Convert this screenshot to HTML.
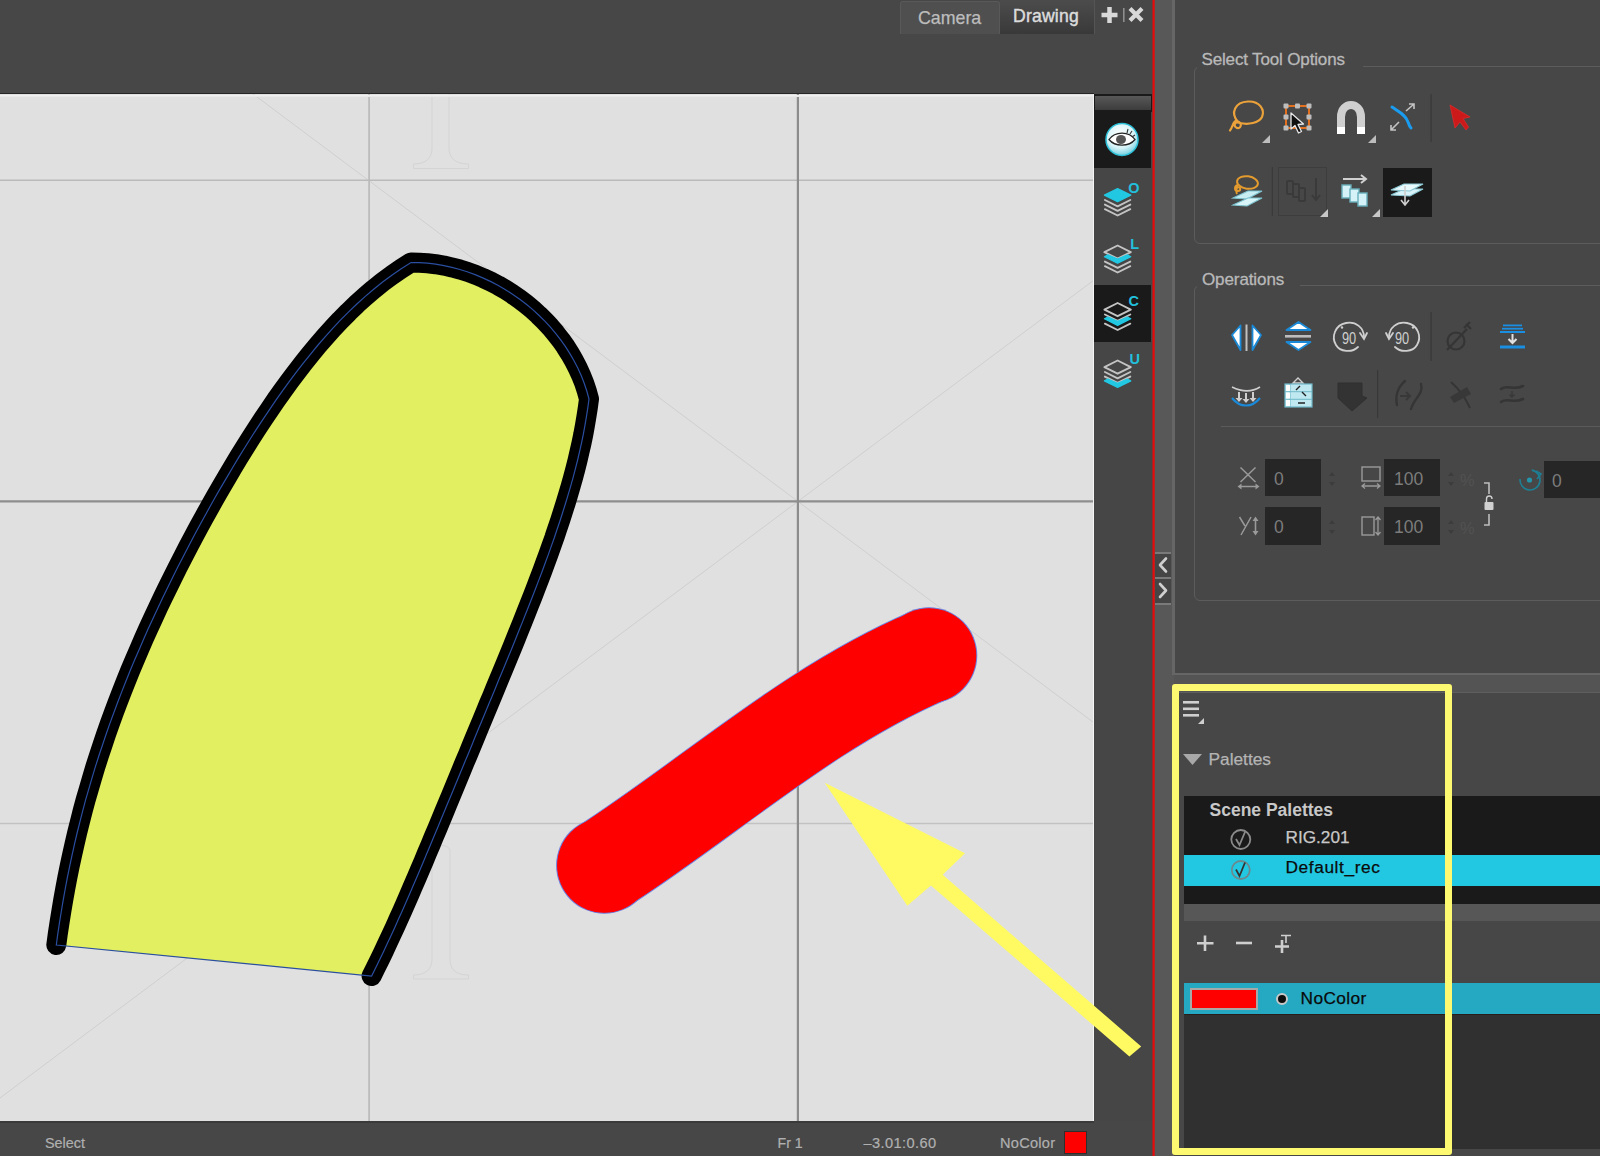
<!DOCTYPE html>
<html><head><meta charset="utf-8">
<style>
*{margin:0;padding:0;box-sizing:border-box}
html,body{width:1600px;height:1156px;overflow:hidden;background:#474747;font-family:"Liberation Sans",sans-serif}
.a{position:absolute}
.t{position:absolute;white-space:nowrap;line-height:1}
svg{position:absolute;overflow:visible}
</style></head><body>
<!-- ===== top bar ===== -->
<div class="a" style="left:900px;top:1px;width:100px;height:33px;background:#4f4f4f;border:1px solid #595959;border-bottom:none;border-radius:3px 3px 0 0"></div>
<div class="a" style="left:1000px;top:0px;width:95px;height:34px;background:linear-gradient(#4c4c4c,#393939);border-right:1px solid #555"></div>
<div class="t" style="left:918px;top:10.2px;font-size:17.8px;color:#bdbdbd;-webkit-text-stroke:0.25px #bdbdbd">Camera</div>
<div class="t" style="left:1013px;top:7.6px;font-size:17.6px;color:#dcdcdc;-webkit-text-stroke:0.45px #dcdcdc;letter-spacing:0.2px">Drawing</div>
<svg style="left:1100px;top:6px" width="46" height="18" viewBox="0 0 46 18">
<path d="M9.5,1 V17 M1.5,9 H17.5" stroke="#d8d8d8" stroke-width="4.5"/>
<path d="M23.8,2 V16" stroke="#8e8e8e" stroke-width="1.6"/>
<path d="M30,2.5 L42,14.5 M42,2.5 L30,14.5" stroke="#d8d8d8" stroke-width="4.2"/>
</svg>
<!-- ===== canvas ===== -->
<div class="a" style="left:0;top:92.5px;width:1094px;height:2px;background:#262626"></div>
<div class="a" style="left:0;top:94px;width:1094px;height:1027px;overflow:hidden;background:#e0e0e0">
<svg style="left:0;top:-94px" width="1094" height="1121" viewBox="0 0 1094 1121">
<g stroke="#cfcfcf" stroke-width="1" fill="none">
<line x1="0" y1="-95.2" x2="1094" y2="722.8"/>
<line x1="0" y1="1098" x2="1094" y2="280"/>
<path d="M413.5,168.5 H468.5 V164 C455,164 449,158 449,148 V94 M413.5,168.5 V164 C426,164 432,158 432,148 V94" stroke="#d4d4d4"/>
<path d="M413.5,979 H468.5 V975 C455,975 450,969 450,959 V851 C450,848 447,845.5 441,845.5 C435,845.5 432,848 432,851 V959 C432,969 426,975 413.5,975Z" stroke="#d4d4d4"/>
</g>
<line x1="369.1" y1="94" x2="369.1" y2="1121" stroke="#bababa" stroke-width="1.7"/>
<line x1="0" y1="180.3" x2="1094" y2="180.3" stroke="#bababa" stroke-width="1.4"/>
<line x1="0" y1="823.4" x2="1094" y2="823.4" stroke="#c2c2c2" stroke-width="1.5"/>
<line x1="797.9" y1="94" x2="797.9" y2="1121" stroke="#8c8c8c" stroke-width="2.2"/>
<line x1="0" y1="501.4" x2="1094" y2="501.4" stroke="#8e8e8e" stroke-width="2.1"/>
<path d="M56.3,945.0 L57.8,933.9 L59.5,922.7 L61.3,911.5 L63.2,900.2 L65.2,889.0 L67.3,877.8 L69.6,866.6 L72.0,855.3 L74.5,844.2 L77.1,833.0 L79.9,821.9 L82.7,810.8 L85.7,799.7 L88.9,788.7 L92.1,777.7 L95.4,766.7 L98.9,755.8 L102.5,745.0 L106.1,734.2 L109.9,723.4 L113.8,712.7 L117.8,702.0 L121.9,691.4 L126.1,680.8 L130.3,670.3 L134.7,659.8 L139.2,649.4 L143.7,638.9 L148.3,628.6 L153.1,618.2 L157.9,607.9 L162.7,597.7 L167.7,587.5 L172.7,577.3 L177.8,567.1 L183.0,557.0 L188.2,546.9 L193.5,536.8 L198.9,526.7 L204.4,516.7 L209.9,506.8 L215.5,496.8 L221.2,486.9 L227.0,477.1 L232.8,467.2 L238.7,457.4 L244.7,447.7 L250.8,438.0 L257.0,428.4 L263.3,418.8 L269.7,409.4 L276.1,399.9 L282.7,390.6 L289.4,381.4 L296.3,372.2 L303.3,363.2 L310.4,354.3 L317.6,345.5 L325.1,336.9 L332.7,328.4 L340.4,320.2 L348.4,312.1 L356.6,304.2 L365.0,296.6 L373.7,289.2 L382.6,282.0 L391.8,275.2 L401.2,268.7 L411.0,262.5 L419.3,262.7 L427.5,263.2 L435.7,264.2 L443.9,265.6 L451.9,267.4 L459.9,269.5 L467.9,272.0 L475.7,274.9 L483.3,278.1 L490.9,281.6 L498.3,285.5 L505.5,289.7 L512.5,294.2 L519.4,299.0 L526.0,304.0 L532.5,309.4 L538.6,315.0 L544.6,320.9 L550.2,326.9 L555.6,333.3 L560.7,339.8 L565.5,346.6 L569.9,353.6 L574.0,360.7 L577.8,368.1 L581.2,375.6 L584.2,383.2 L586.8,391.0 L589.0,399.0 L587.8,407.9 L586.4,416.8 L584.9,425.6 L583.3,434.4 L581.5,443.1 L579.5,451.8 L577.5,460.5 L575.3,469.2 L573.0,477.8 L570.6,486.4 L568.1,494.9 L565.5,503.5 L562.8,512.0 L560.1,520.5 L557.2,529.0 L554.4,537.5 L551.4,545.9 L548.4,554.4 L545.3,562.8 L542.2,571.2 L539.0,579.6 L535.8,588.0 L532.6,596.3 L529.3,604.7 L526.0,613.0 L522.7,621.4 L519.3,629.7 L516.0,638.0 L512.6,646.4 L509.2,654.7 L505.8,663.0 L502.4,671.3 L498.9,679.6 L495.5,687.9 L492.1,696.2 L488.6,704.5 L485.2,712.8 L481.8,721.0 L478.3,729.3 L474.9,737.6 L471.5,745.9 L468.1,754.2 L464.6,762.4 L461.2,770.7 L457.8,779.0 L454.4,787.3 L451.0,795.5 L447.5,803.8 L444.1,812.1 L440.7,820.3 L437.3,828.6 L433.8,836.8 L430.4,845.1 L426.9,853.3 L423.5,861.6 L420.0,869.8 L416.5,878.0 L412.9,886.3 L409.4,894.5 L405.8,902.7 L402.2,910.9 L398.5,919.1 L394.9,927.2 L391.1,935.4 L387.3,943.5 L383.5,951.7 L379.6,959.8 L375.6,967.9 L371.6,976.0Z" fill="#e1ef61"/>
<path d="M56.3,945.0 L57.8,933.9 L59.5,922.7 L61.3,911.5 L63.2,900.2 L65.2,889.0 L67.3,877.8 L69.6,866.6 L72.0,855.3 L74.5,844.2 L77.1,833.0 L79.9,821.9 L82.7,810.8 L85.7,799.7 L88.9,788.7 L92.1,777.7 L95.4,766.7 L98.9,755.8 L102.5,745.0 L106.1,734.2 L109.9,723.4 L113.8,712.7 L117.8,702.0 L121.9,691.4 L126.1,680.8 L130.3,670.3 L134.7,659.8 L139.2,649.4 L143.7,638.9 L148.3,628.6 L153.1,618.2 L157.9,607.9 L162.7,597.7 L167.7,587.5 L172.7,577.3 L177.8,567.1 L183.0,557.0 L188.2,546.9 L193.5,536.8 L198.9,526.7 L204.4,516.7 L209.9,506.8 L215.5,496.8 L221.2,486.9 L227.0,477.1 L232.8,467.2 L238.7,457.4 L244.7,447.7 L250.8,438.0 L257.0,428.4 L263.3,418.8 L269.7,409.4 L276.1,399.9 L282.7,390.6 L289.4,381.4 L296.3,372.2 L303.3,363.2 L310.4,354.3 L317.6,345.5 L325.1,336.9 L332.7,328.4 L340.4,320.2 L348.4,312.1 L356.6,304.2 L365.0,296.6 L373.7,289.2 L382.6,282.0 L391.8,275.2 L401.2,268.7 L411.0,262.5 L419.3,262.7 L427.5,263.2 L435.7,264.2 L443.9,265.6 L451.9,267.4 L459.9,269.5 L467.9,272.0 L475.7,274.9 L483.3,278.1 L490.9,281.6 L498.3,285.5 L505.5,289.7 L512.5,294.2 L519.4,299.0 L526.0,304.0 L532.5,309.4 L538.6,315.0 L544.6,320.9 L550.2,326.9 L555.6,333.3 L560.7,339.8 L565.5,346.6 L569.9,353.6 L574.0,360.7 L577.8,368.1 L581.2,375.6 L584.2,383.2 L586.8,391.0 L589.0,399.0 L587.8,407.9 L586.4,416.8 L584.9,425.6 L583.3,434.4 L581.5,443.1 L579.5,451.8 L577.5,460.5 L575.3,469.2 L573.0,477.8 L570.6,486.4 L568.1,494.9 L565.5,503.5 L562.8,512.0 L560.1,520.5 L557.2,529.0 L554.4,537.5 L551.4,545.9 L548.4,554.4 L545.3,562.8 L542.2,571.2 L539.0,579.6 L535.8,588.0 L532.6,596.3 L529.3,604.7 L526.0,613.0 L522.7,621.4 L519.3,629.7 L516.0,638.0 L512.6,646.4 L509.2,654.7 L505.8,663.0 L502.4,671.3 L498.9,679.6 L495.5,687.9 L492.1,696.2 L488.6,704.5 L485.2,712.8 L481.8,721.0 L478.3,729.3 L474.9,737.6 L471.5,745.9 L468.1,754.2 L464.6,762.4 L461.2,770.7 L457.8,779.0 L454.4,787.3 L451.0,795.5 L447.5,803.8 L444.1,812.1 L440.7,820.3 L437.3,828.6 L433.8,836.8 L430.4,845.1 L426.9,853.3 L423.5,861.6 L420.0,869.8 L416.5,878.0 L412.9,886.3 L409.4,894.5 L405.8,902.7 L402.2,910.9 L398.5,919.1 L394.9,927.2 L391.1,935.4 L387.3,943.5 L383.5,951.7 L379.6,959.8 L375.6,967.9 L371.6,976.0" fill="none" stroke="#000" stroke-width="20" stroke-linecap="round" stroke-linejoin="round"/>
<path d="M56.3,945.0 L57.8,933.9 L59.5,922.7 L61.3,911.5 L63.2,900.2 L65.2,889.0 L67.3,877.8 L69.6,866.6 L72.0,855.3 L74.5,844.2 L77.1,833.0 L79.9,821.9 L82.7,810.8 L85.7,799.7 L88.9,788.7 L92.1,777.7 L95.4,766.7 L98.9,755.8 L102.5,745.0 L106.1,734.2 L109.9,723.4 L113.8,712.7 L117.8,702.0 L121.9,691.4 L126.1,680.8 L130.3,670.3 L134.7,659.8 L139.2,649.4 L143.7,638.9 L148.3,628.6 L153.1,618.2 L157.9,607.9 L162.7,597.7 L167.7,587.5 L172.7,577.3 L177.8,567.1 L183.0,557.0 L188.2,546.9 L193.5,536.8 L198.9,526.7 L204.4,516.7 L209.9,506.8 L215.5,496.8 L221.2,486.9 L227.0,477.1 L232.8,467.2 L238.7,457.4 L244.7,447.7 L250.8,438.0 L257.0,428.4 L263.3,418.8 L269.7,409.4 L276.1,399.9 L282.7,390.6 L289.4,381.4 L296.3,372.2 L303.3,363.2 L310.4,354.3 L317.6,345.5 L325.1,336.9 L332.7,328.4 L340.4,320.2 L348.4,312.1 L356.6,304.2 L365.0,296.6 L373.7,289.2 L382.6,282.0 L391.8,275.2 L401.2,268.7 L411.0,262.5 L419.3,262.7 L427.5,263.2 L435.7,264.2 L443.9,265.6 L451.9,267.4 L459.9,269.5 L467.9,272.0 L475.7,274.9 L483.3,278.1 L490.9,281.6 L498.3,285.5 L505.5,289.7 L512.5,294.2 L519.4,299.0 L526.0,304.0 L532.5,309.4 L538.6,315.0 L544.6,320.9 L550.2,326.9 L555.6,333.3 L560.7,339.8 L565.5,346.6 L569.9,353.6 L574.0,360.7 L577.8,368.1 L581.2,375.6 L584.2,383.2 L586.8,391.0 L589.0,399.0 L587.8,407.9 L586.4,416.8 L584.9,425.6 L583.3,434.4 L581.5,443.1 L579.5,451.8 L577.5,460.5 L575.3,469.2 L573.0,477.8 L570.6,486.4 L568.1,494.9 L565.5,503.5 L562.8,512.0 L560.1,520.5 L557.2,529.0 L554.4,537.5 L551.4,545.9 L548.4,554.4 L545.3,562.8 L542.2,571.2 L539.0,579.6 L535.8,588.0 L532.6,596.3 L529.3,604.7 L526.0,613.0 L522.7,621.4 L519.3,629.7 L516.0,638.0 L512.6,646.4 L509.2,654.7 L505.8,663.0 L502.4,671.3 L498.9,679.6 L495.5,687.9 L492.1,696.2 L488.6,704.5 L485.2,712.8 L481.8,721.0 L478.3,729.3 L474.9,737.6 L471.5,745.9 L468.1,754.2 L464.6,762.4 L461.2,770.7 L457.8,779.0 L454.4,787.3 L451.0,795.5 L447.5,803.8 L444.1,812.1 L440.7,820.3 L437.3,828.6 L433.8,836.8 L430.4,845.1 L426.9,853.3 L423.5,861.6 L420.0,869.8 L416.5,878.0 L412.9,886.3 L409.4,894.5 L405.8,902.7 L402.2,910.9 L398.5,919.1 L394.9,927.2 L391.1,935.4 L387.3,943.5 L383.5,951.7 L379.6,959.8 L375.6,967.9 L371.6,976.0Z" fill="none" stroke="#2a4ea0" stroke-width="1.2"/>
<g fill="none" stroke-linecap="round"><path d="M604.4,865.5 C711.5,796.2 809.9,706.3 929.0,655.5" stroke="#7080e0" stroke-width="95.5"/><path d="M604.4,865.5 C711.5,796.2 809.9,706.3 929.0,655.5" stroke="#ff0000" stroke-width="93.5"/></g>
<circle cx="604.4" cy="865.5" r="48.3" fill="#7080e0"/><circle cx="929" cy="655.5" r="48.3" fill="#7080e0"/><path d="M604.4,865.5 C711.5,796.2 809.9,706.3 929.0,655.5" fill="none" stroke="#ff0000" stroke-width="93.5" stroke-linecap="round"/><circle cx="604.4" cy="865.5" r="47.3" fill="#ff0000"/><circle cx="929" cy="655.5" r="47.3" fill="#ff0000"/>
</svg>
<div class="a" style="left:0;top:0.5px;width:1094px;height:2px;background:linear-gradient(#f2f2f2,#e4e4e4)"></div>
<div class="a" style="left:1093px;top:0;width:1px;height:1027px;background:#f4f4f4"></div>
</div>
<!-- ===== status bar ===== -->
<div class="a" style="left:0;top:1121px;width:1094px;height:2px;background:#3a3a3a"></div>
<div class="t" style="left:45px;top:1135.7px;font-size:14.4px;color:#b0b0b0;-webkit-text-stroke:0.2px #b0b0b0">Select</div>
<div class="t" style="left:777.5px;top:1136px;font-size:14.2px;color:#b0b0b0;-webkit-text-stroke:0.2px #b0b0b0">Fr 1</div>
<div class="t" style="left:863.5px;top:1135.6px;font-size:14.6px;color:#b0b0b0;letter-spacing:0.4px;-webkit-text-stroke:0.2px #b0b0b0">&#8211;3.01:0.60</div>
<div class="t" style="left:1000px;top:1135.5px;font-size:14.6px;color:#b0b0b0;letter-spacing:0.25px;-webkit-text-stroke:0.2px #b0b0b0">NoColor</div>
<div class="a" style="left:1064px;top:1131px;width:23px;height:23px;background:#ff0000;border:1px solid #2e2e2e"></div>
<!-- ===== toolbar ===== -->
<div class="a" style="left:1094px;top:94px;width:58px;height:1027px;background:#464646"></div>
<div class="a" style="left:1094px;top:94px;width:58px;height:18px;background:#1a1a1a"></div>
<div class="a" style="left:1095px;top:96px;width:56px;height:14px;background:linear-gradient(#585858,#3c3c3c)"></div>
<div class="a" style="left:1094px;top:112px;width:57px;height:56px;background:#1a1a1a"></div>
<div class="a" style="left:1094px;top:285px;width:57px;height:57px;background:#1a1a1a"></div>
<!-- ===== divider ===== -->
<div class="a" style="left:1154px;top:0;width:18px;height:1156px;background:#585858"></div>
<svg style="left:1150px;top:0" width="8" height="1156"><rect x="2.5" y="0" width="2.2" height="1156" fill="#e60a0a"/></svg>
<div class="a" style="left:1172px;top:0;width:2px;height:675px;background:#636363"></div>
<div class="a" style="left:1172px;top:675px;width:2px;height:481px;background:#585858"></div>
<div class="a" style="left:1172px;top:672.5px;width:428px;height:2px;background:#666"></div>
<div class="a" style="left:1172px;top:0;width:2.5px;height:674px;background:#666;border-radius:0 0 0 3px"></div>
<!-- ===== right panel ===== -->
<div class="a" style="left:1174px;top:675px;width:426px;height:18px;background:#545454"></div>
<div class="a" style="left:1174px;top:692px;width:426px;height:1px;background:#5e5e5e"></div>
<!-- ===== toolbar icons ===== -->
<svg style="left:1094px;top:94px" width="58" height="300" viewBox="1094 94 58 300">
<defs><radialGradient id="eg" cx="0.45" cy="0.35" r="0.7"><stop offset="0" stop-color="#ffffff"/><stop offset="0.6" stop-color="#d8f4f8"/><stop offset="1" stop-color="#5ec8dc"/></radialGradient></defs>
<circle cx="1122" cy="139.5" r="16" fill="url(#eg)" stroke="#2cc0d8" stroke-width="1.5"/>
<path d="M1109,139.5 C1115,131 1129,131 1135,139.5 C1129,147 1115,147 1109,139.5Z" fill="#fff" stroke="#222" stroke-width="1.3"/>
<ellipse cx="1121" cy="139.5" rx="5" ry="4.5" fill="#555"/>
<path d="M1127,133 L1128,129 M1130,134 L1132,131 M1132,137 L1135,135" stroke="#333" stroke-width="1.1"/>
<g><path d="M1104.3999999999999,195.1 L1117.6,188.5 L1130.8,195.1 L1117.6,201.7Z" fill="#22c8e2" stroke="#22c8e2" stroke-width="1.2" stroke-linejoin="round"/><path d="M1104.8999999999999,200.0 L1117.6,206.29999999999998 L1130.3,200.0" fill="none" stroke="#c4c4c4" stroke-width="1.9" stroke-linejoin="round" stroke-linecap="round"/><path d="M1104.8999999999999,204.6 L1117.6,210.89999999999998 L1130.3,204.6" fill="none" stroke="#c4c4c4" stroke-width="1.9" stroke-linejoin="round" stroke-linecap="round"/><path d="M1104.8999999999999,209.20000000000002 L1117.6,215.5 L1130.3,209.20000000000002" fill="none" stroke="#c4c4c4" stroke-width="1.9" stroke-linejoin="round" stroke-linecap="round"/><text x="1128.3" y="192.8" font-size="14.5" font-weight="bold" font-family="Liberation Sans" fill="#22c0dc">O</text><path d="M1104.3999999999999,252.1 L1117.6,245.5 L1130.8,252.1 L1117.6,258.7Z" fill="none" stroke="#c4c4c4" stroke-width="1.9" stroke-linejoin="round"/><path d="M1104.3999999999999,256.7 L1117.6,263.3 L1130.8,256.7 L1127.3,254.89999999999998 L1117.6,259.1 L1107.8999999999999,254.89999999999998Z" fill="#22c8e2" stroke="#22c8e2" stroke-width="1.2" stroke-linejoin="round"/><path d="M1104.8999999999999,261.6 L1117.6,267.9 L1130.3,261.6" fill="none" stroke="#c4c4c4" stroke-width="1.9" stroke-linejoin="round" stroke-linecap="round"/><path d="M1104.8999999999999,266.20000000000005 L1117.6,272.5 L1130.3,266.20000000000005" fill="none" stroke="#c4c4c4" stroke-width="1.9" stroke-linejoin="round" stroke-linecap="round"/><text x="1130.3" y="248.5" font-size="14.5" font-weight="bold" font-family="Liberation Sans" fill="#22c0dc">L</text><path d="M1104.3999999999999,309.6 L1117.6,303 L1130.8,309.6 L1117.6,316.2Z" fill="none" stroke="#c4c4c4" stroke-width="1.9" stroke-linejoin="round"/><path d="M1104.8999999999999,314.50000000000006 L1117.6,320.8 L1130.3,314.50000000000006" fill="none" stroke="#c4c4c4" stroke-width="1.9" stroke-linejoin="round" stroke-linecap="round"/><path d="M1104.3999999999999,318.8 L1117.6,325.4 L1130.8,318.8 L1127.3,317.0 L1117.6,321.2 L1107.8999999999999,317.0Z" fill="#22c8e2" stroke="#22c8e2" stroke-width="1.2" stroke-linejoin="round"/><path d="M1104.8999999999999,323.70000000000005 L1117.6,330.0 L1130.3,323.70000000000005" fill="none" stroke="#c4c4c4" stroke-width="1.9" stroke-linejoin="round" stroke-linecap="round"/><text x="1128.6" y="305.5" font-size="14.5" font-weight="bold" font-family="Liberation Sans" fill="#22c0dc">C</text><path d="M1104.3999999999999,367.1 L1117.6,360.5 L1130.8,367.1 L1117.6,373.7Z" fill="none" stroke="#c4c4c4" stroke-width="1.9" stroke-linejoin="round"/><path d="M1104.8999999999999,372.00000000000006 L1117.6,378.3 L1130.3,372.00000000000006" fill="none" stroke="#c4c4c4" stroke-width="1.9" stroke-linejoin="round" stroke-linecap="round"/><path d="M1104.8999999999999,376.6 L1117.6,382.9 L1130.3,376.6" fill="none" stroke="#c4c4c4" stroke-width="1.9" stroke-linejoin="round" stroke-linecap="round"/><path d="M1104.3999999999999,380.90000000000003 L1117.6,387.5 L1130.8,380.90000000000003 L1127.3,379.1 L1117.6,383.3 L1107.8999999999999,379.1Z" fill="#22c8e2" stroke="#22c8e2" stroke-width="1.2" stroke-linejoin="round"/><text x="1129.6" y="363.5" font-size="14.5" font-weight="bold" font-family="Liberation Sans" fill="#22c0dc">U</text></g>
</svg>
<!-- ===== select tool options ===== -->
<div class="a" style="left:1194px;top:66px;width:420px;height:178px;border:1.5px solid #5c5c5c;border-radius:6px"></div>
<div class="a" style="left:1197px;top:50px;width:166px;height:24px;background:#474747"></div>
<div class="t" style="left:1201.5px;top:51.1px;font-size:17px;color:#b9b9b9;letter-spacing:-0.15px;-webkit-text-stroke:0.3px #b9b9b9">Select Tool Options</div>
<svg style="left:1220px;top:90px" width="270" height="135" viewBox="1220 90 270 135">
<!-- lasso -->
<g fill="none" stroke="#eca23a" stroke-width="2.2" stroke-linecap="round">
<path d="M1238,122 C1230,113 1235,102 1248,101.5 C1260,101 1265,110 1262,117 C1259,123 1248,125 1240,123 C1234,121 1233,126 1237,128 C1241,129 1243,123 1237,121 C1233,120 1233,127 1230,130.5"/>
</g>
<path d="M1270,135 V143 H1262Z" fill="#bdbdbd"/>
<!-- select box -->
<g stroke="#e2701e" stroke-width="2"><path d="M1286,106 H1309 V128 H1286Z" fill="none"/></g>
<g fill="#bdbdbd"><rect x="1283.5" y="103.5" width="5" height="5" rx="1"/><rect x="1295" y="103.5" width="5" height="5" rx="1"/><rect x="1306.5" y="103.5" width="5" height="5" rx="1"/><rect x="1283.5" y="114.5" width="5" height="5" rx="1"/><rect x="1306.5" y="114.5" width="5" height="5" rx="1"/><rect x="1283.5" y="125.5" width="5" height="5" rx="1"/><rect x="1306.5" y="125.5" width="5" height="5" rx="1"/></g>
<path d="M1291,113 L1291,129 L1295,125.5 L1298.5,133 L1301.5,131.5 L1298,124.5 L1303.5,124 Z" fill="#111" stroke="#e8e8e8" stroke-width="1.3" stroke-linejoin="round"/>
<!-- magnet -->
<path d="M1341,134 V117 C1341,101 1361,101 1361,117 V134" fill="none" stroke="#cfcfcf" stroke-width="8"/>
<rect x="1337" y="127" width="8" height="7" fill="#fff"/><rect x="1357" y="127" width="8" height="7" fill="#fff"/>
<path d="M1376,135 V143 H1368Z" fill="#bdbdbd"/>
<!-- blue curve -->
<path d="M1392,107 C1398,111 1406,115 1408,122 C1409,125 1410,127 1411,128" fill="none" stroke="#1a9cf0" stroke-width="3" stroke-linecap="round"/>
<g fill="none" stroke="#c4c4c4" stroke-width="1.6"><path d="M1406,111 L1414,104 M1409,104 H1414 V109"/><path d="M1399,122 L1391,130 M1391,125 V130 H1396"/></g>
<!-- separator -->
<rect x="1430.5" y="94" width="1.2" height="48" fill="#383838"/>
<!-- red arrow -->
<path d="M1450,105 L1470,117 L1463,118.5 L1468.5,127 L1466,130 L1460,122 L1455,128 Z" fill="#cc1a1a" stroke="#e02828" stroke-width="0.8" stroke-linejoin="round"/>
<!-- row 2 -->
<g fill="none" stroke="#e39a2e" stroke-width="2"><ellipse cx="1247.5" cy="182.5" rx="10.5" ry="6.2" transform="rotate(8 1247.5 182.5)"/><path d="M1238,185 C1234,186 1234,191 1238,191 C1241,191 1241,187 1238,187 C1236,188 1236,192 1237,194"/></g>
<path d="M1233,198 L1248,191 L1262,191 L1247,199Z" fill="#c8eef4" stroke="#7fc4d0" stroke-width="1.2"/>
<path d="M1233,205 L1248,198 L1262,198 L1247,206Z" fill="#d8f6fa" stroke="#7fc4d0" stroke-width="1.2"/>
<rect x="1271.8" y="167" width="1.2" height="49" fill="#3a3a3a"/>
<rect x="1278.5" y="167.5" width="48" height="48" fill="none" stroke="#3d3d3d" stroke-width="1"/>
<g fill="none" stroke="#3a3a3a" stroke-width="2"><rect x="1287" y="181" width="6" height="13" rx="1"/><rect x="1293" y="184" width="6" height="13" rx="1"/><rect x="1299" y="188" width="6" height="13" rx="1"/><path d="M1316,178 V200 M1312,195 L1316,200 L1320,195"/></g>
<path d="M1328,209 V217 H1320Z" fill="#c8c8c8"/>
<g fill="#d4f2f8" stroke="#68aebb" stroke-width="1.4"><rect x="1342" y="185" width="9" height="13"/><rect x="1350" y="189" width="9" height="13"/><rect x="1358" y="193" width="9" height="13"/></g>
<path d="M1343,179 H1366 M1361,175 L1366,179 L1361,183" fill="none" stroke="#d0d0d0" stroke-width="2"/>
<path d="M1380,209 V217 H1372Z" fill="#c8c8c8"/>
<rect x="1383" y="168" width="49" height="49" fill="#1a1a1a"/>
<path d="M1391,195 L1404,189 L1423,189 L1410,196Z" fill="#d8f4fa" stroke="#8cc8d4" stroke-width="1.2"/>
<path d="M1391,190 L1404,184 L1423,184 L1410,191Z" fill="#e8fafe" stroke="#8cc8d4" stroke-width="1.2"/>
<path d="M1405,186 V205 M1401,200 L1405,205 L1409,200" fill="none" stroke="#cfcfcf" stroke-width="1.6"/>
</svg>
<!-- ===== operations ===== -->
<div class="a" style="left:1194px;top:285px;width:420px;height:316px;border:1.5px solid #5c5c5c;border-radius:6px"></div>
<div class="a" style="left:1197px;top:270px;width:103px;height:24px;background:#474747"></div>
<div class="t" style="left:1202px;top:270.9px;font-size:17px;color:#b9b9b9;letter-spacing:-0.1px;-webkit-text-stroke:0.3px #b9b9b9">Operations</div>
<div class="a" style="left:1221px;top:425.5px;width:379px;height:1.5px;background:#5a5a5a"></div>
<svg style="left:1220px;top:300px" width="380" height="250" viewBox="1220 300 380 250">
<!-- flip h -->
<path d="M1240.5,325.5 L1232,335 L1240.5,350Z" fill="#fff" stroke="#1a8ad8" stroke-width="1.8" stroke-linejoin="round"/>
<path d="M1252.5,325.5 L1261,335 L1252.5,350Z" fill="#fff" stroke="#1a8ad8" stroke-width="1.8" stroke-linejoin="round"/>
<rect x="1245.5" y="324.5" width="2" height="26.5" fill="#c0c0c0"/>
<!-- flip v -->
<path d="M1286.5,330 L1298.5,322 L1310.5,330Z" fill="#fff" stroke="#1a8ad8" stroke-width="1.8" stroke-linejoin="round"/>
<path d="M1286.5,342 L1298.5,350 L1310.5,342Z" fill="#fff" stroke="#1a8ad8" stroke-width="1.8" stroke-linejoin="round"/>
<rect x="1285" y="335" width="26" height="2.6" fill="#bdbdbd"/>
<!-- rotate cw -->
<g fill="none" stroke="#cfcfcf" stroke-width="1.8" stroke-linecap="round">
<path d="M1358,347 C1352,353 1340,352 1336,345 C1331,337 1335,325 1346,323 C1356,321 1364,328 1364,337"/>
<path d="M1360,333 L1364,339 L1367,333"/>
</g>
<text x="1342" y="344" font-size="16" font-family="Liberation Sans" fill="#cfcfcf" transform="translate(1342 0) scale(0.8 1) translate(-1342 0)">90</text>
<circle cx="1342" cy="327.5" r="1.2" fill="#cfcfcf"/>
<!-- rotate ccw -->
<g fill="none" stroke="#cfcfcf" stroke-width="1.8" stroke-linecap="round">
<path d="M1395,347 C1401,353 1413,352 1417,345 C1422,337 1418,325 1407,323 C1397,321 1389,328 1389,337"/>
<path d="M1386,333 L1389,339 L1393,333"/>
</g>
<text x="1395" y="344" font-size="16" font-family="Liberation Sans" fill="#cfcfcf" transform="translate(1395 0) scale(0.8 1) translate(-1395 0)">90</text>
<circle cx="1413" cy="327.5" r="1.2" fill="#cfcfcf"/>
<rect x="1430.5" y="312" width="1.2" height="49" fill="#383838"/>
<!-- dark pen -->
<g fill="none" stroke="#353535" stroke-width="2.2"><circle cx="1456" cy="341" r="8.5"/><path d="M1447,350 L1467,329"/><path d="M1466,324 L1471,329 M1464,328 L1470,322"/></g>
<!-- blue flatten -->
<g fill="#1a8ee0"><rect x="1503" y="324.5" width="19" height="1.8"/><rect x="1502" y="327.8" width="21" height="1.8"/><rect x="1500" y="331" width="25" height="2"/><rect x="1500" y="345.5" width="25" height="3"/></g>
<path d="M1512.5,334 V343 M1508.5,339 L1512.5,343 L1516.5,339" fill="none" stroke="#e0e0e0" stroke-width="2"/>
<!-- row 2 -->
<path d="M1232,387 C1242,392 1252,392 1260,387" fill="none" stroke="#cfcfcf" stroke-width="1.6"/>
<path d="M1232,398 C1240,408 1252,408 1260,398" fill="none" stroke="#1a8ad8" stroke-width="2.2"/>
<g fill="#cfcfcf"><path d="M1238,392 V398 H1235.5 L1239,402 L1242.5,398 H1240 V392Z"/><path d="M1245,393 V399 H1242.5 L1246,403 L1249.5,399 H1247 V393Z"/><path d="M1252,392 V398 H1249.5 L1253,402 L1256.5,398 H1254 V392Z"/></g>
<path d="M1293,383 L1298,378 L1303,383Z" fill="none" stroke="#cfcfcf" stroke-width="1.4"/>
<rect x="1285" y="384" width="27" height="23" fill="#bfe8f0" stroke="#70b8c8" stroke-width="1.2"/>
<g stroke="#70b8c8" stroke-width="1"><path d="M1285,391.7 H1312 M1285,399.3 H1312 M1290,384 V407"/></g>
<g fill="#fff"><rect x="1286" y="385" width="4" height="6"/><rect x="1286" y="392.5" width="4" height="6"/><rect x="1286" y="400" width="4" height="6"/></g>
<path d="M1296,390 L1300,386 M1302,392 L1306,396 M1298,403 H1305" stroke="#222" stroke-width="1.4"/>
<path d="M1338,383 H1362 V396 L1367,398 L1352,411 L1338,398Z" fill="#333" stroke="#303030" stroke-width="1"/>
<rect x="1377" y="370" width="1.2" height="48" fill="#383838"/>
<g fill="none" stroke="#353535" stroke-width="2.4" stroke-linecap="round"><path d="M1405,381 C1398,387 1395,396 1397,405"/><path d="M1421,384 C1424,394 1414,398 1411,409"/></g>
<path d="M1400,396 H1410 M1406,392 L1410,396 L1406,400" fill="none" stroke="#383838" stroke-width="2"/>
<g fill="none" stroke="#353535" stroke-width="2"><path d="M1451,382 C1460,390 1466,399 1470,408"/></g>
<path d="M1450,397 L1467,387 L1471,394 L1454,403Z" fill="#383838"/>
<g fill="none" stroke="#353535" stroke-width="2.6" stroke-linecap="round"><path d="M1501,389 C1507,384 1514,391 1523,386"/><path d="M1501,402 C1507,397 1514,404 1523,399"/></g>
<path d="M1512,391 V397 M1509.5,394.5 L1512,397 L1514.5,394.5" fill="none" stroke="#383838" stroke-width="1.4"/>
<!-- fields row -->
<g fill="none" stroke="#9a9a9a" stroke-width="1.5"><path d="M1240.5,467.5 L1255.5,482 M1255.5,467.5 L1240.5,482"/><path d="M1240,486.5 H1257"/></g><path d="M1237.5,486.5 L1241.5,483.5 V489.5Z M1259.5,486.5 L1255.5,483.5 V489.5Z" fill="#9a9a9a"/>
<rect x="1265" y="459" width="56" height="37" fill="#262626"/>
<text x="1274" y="484.5" font-size="17.5" font-family="Liberation Sans" fill="#7c7c7c">0</text>
<path d="M1329,476 L1332,472 L1335,476Z M1329,482 L1332,486 L1335,482Z" fill="#3c3c3c"/>
<rect x="1362" y="467" width="18" height="14" fill="none" stroke="#9a9a9a" stroke-width="1.4"/>
<path d="M1362,486 H1380 M1365,483.5 L1362,486 L1365,488.5 M1377,483.5 L1380,486 L1377,488.5" fill="none" stroke="#9a9a9a" stroke-width="1.3"/>
<rect x="1384" y="459" width="56" height="37" fill="#262626"/>
<text x="1394" y="484.5" font-size="17.5" font-family="Liberation Sans" fill="#7c7c7c">100</text>
<path d="M1448,476 L1451,472 L1454,476Z M1448,482 L1451,486 L1454,482Z" fill="#3c3c3c"/>
<text x="1460" y="485.5" font-size="16.5" font-family="Liberation Sans" fill="#525252">%</text>
<path d="M1239.5,517 L1245,526 M1251,517 L1241,535" fill="none" stroke="#9a9a9a" stroke-width="1.5"/>
<path d="M1255.5,520 V532" fill="none" stroke="#9a9a9a" stroke-width="1.6"/><path d="M1255.5,516.5 L1252.5,521 H1258.5Z M1255.5,535.5 L1252.5,531 H1258.5Z" fill="#9a9a9a"/>
<rect x="1265" y="507" width="56" height="38" fill="#262626"/>
<text x="1274" y="532.5" font-size="17.5" font-family="Liberation Sans" fill="#7c7c7c">0</text>
<path d="M1329,524 L1332,520 L1335,524Z M1329,530 L1332,534 L1335,530Z" fill="#3c3c3c"/>
<rect x="1362" y="517" width="12" height="18" fill="none" stroke="#9a9a9a" stroke-width="1.4"/>
<path d="M1378,517 V535 M1375.5,520 L1378,517 L1380.5,520 M1375.5,532 L1378,535 L1380.5,532" fill="none" stroke="#9a9a9a" stroke-width="1.3"/>
<rect x="1384" y="507" width="56" height="38" fill="#262626"/>
<text x="1394" y="532.5" font-size="17.5" font-family="Liberation Sans" fill="#7c7c7c">100</text>
<path d="M1448,524 L1451,520 L1454,524Z M1448,530 L1451,534 L1454,530Z" fill="#3c3c3c"/>
<text x="1460" y="533.5" font-size="16.5" font-family="Liberation Sans" fill="#525252">%</text>
<path d="M1484,483 H1489 V494 M1489,514 V525 H1484" fill="none" stroke="#bdbdbd" stroke-width="1.6"/>
<rect x="1484.5" y="502" width="9" height="8" rx="1" fill="#d0d0d0"/>
<path d="M1486.5,502 V499 C1486.5,495 1492,495 1492,499" fill="none" stroke="#d0d0d0" stroke-width="1.4"/>
<circle cx="1530" cy="480" r="10" fill="none" stroke="#1e7f94" stroke-width="1.6" stroke-dasharray="46 20" transform="rotate(-80 1530 480)"/>
<path d="M1536,471 L1541,474 L1537,479" fill="none" stroke="#1e7f94" stroke-width="1.6"/>
<circle cx="1529.5" cy="480" r="2.6" fill="#2494aa"/>
<rect x="1544" y="461" width="56" height="37" fill="#262626"/>
<text x="1552" y="486.5" font-size="17.5" font-family="Liberation Sans" fill="#7c7c7c">0</text>
</svg>
<!-- ===== collapse buttons ===== -->
<div class="a" style="left:1155px;top:553px;width:16px;height:50px;background:#454545"></div>
<div class="a" style="left:1155px;top:552px;width:16px;height:2px;background:#7a7a7a"></div>
<div class="a" style="left:1155px;top:577px;width:16px;height:2px;background:#7a7a7a"></div>
<div class="a" style="left:1155px;top:603px;width:16px;height:2px;background:#7a7a7a"></div>
<svg style="left:1155px;top:553px" width="16" height="50" viewBox="0 0 16 50">
<path d="M11,5.5 L5,12 L11,18.5" fill="none" stroke="#cfcfcf" stroke-width="2.6" stroke-linecap="round" stroke-linejoin="round"/>
<path d="M5,31 L11,37.5 L5,44" fill="none" stroke="#cfcfcf" stroke-width="2.6" stroke-linecap="round" stroke-linejoin="round"/>
</svg>
<!-- ===== palettes panel ===== -->
<svg style="left:1180px;top:695px" width="40" height="40" viewBox="1180 695 40 40">
<g fill="#cfcfcf"><rect x="1183" y="701" width="16" height="2.6"/><rect x="1183" y="707.5" width="16" height="2.6"/><rect x="1183" y="714" width="16" height="2.6"/></g>
<path d="M1204,718 V724 H1198Z" fill="#cfcfcf"/>
<path d="M1183,754 H1202 L1192.5,765Z" fill="#a8a8a8"/>
</svg>
<div class="t" style="left:1208.5px;top:751.4px;font-size:17.3px;color:#b4b4b4;-webkit-text-stroke:0.25px #b4b4b4">Palettes</div>
<div class="a" style="left:1184px;top:796px;width:416px;height:108px;background:#1a1a1a"></div>
<div class="a" style="left:1184px;top:855px;width:416px;height:31px;background:#22c8e2"></div>
<div class="a" style="left:1184px;top:904px;width:416px;height:17px;background:#575757"></div>
<div class="t" style="left:1209.5px;top:801.5px;font-size:17.5px;font-weight:bold;color:#c8c8c8">Scene Palettes</div>
<div class="t" style="left:1285.5px;top:829.1px;font-size:17.2px;color:#c8c8c8;-webkit-text-stroke:0.25px #c8c8c8">RIG.201</div>
<div class="t" style="left:1285.5px;top:859.2px;font-size:17.3px;color:#0a0a0a;letter-spacing:0.6px;-webkit-text-stroke:0.25px #0a0a0a">Default_rec</div>
<svg style="left:1225px;top:825px" width="32" height="60" viewBox="1225 825 32 60">
<circle cx="1240.8" cy="839.5" r="9.5" fill="none" stroke="#8a8a8a" stroke-width="1.8"/>
<path d="M1236,839 L1239.5,845 L1245,832" fill="none" stroke="#8a8a8a" stroke-width="1.8"/>
<circle cx="1240.8" cy="870" r="9" fill="none" stroke="#6a8a90" stroke-width="1.8"/>
<path d="M1236,869.5 L1239.5,876 L1245,862.5" fill="none" stroke="#333" stroke-width="1.8"/>
</svg>
<svg style="left:1190px;top:930px" width="110" height="30" viewBox="1190 930 110 30">
<path d="M1205,935.5 V951 M1197,943.2 H1213.5" stroke="#cfcfcf" stroke-width="2.6"/>
<path d="M1236,943 H1252" stroke="#cfcfcf" stroke-width="2.6"/>
<path d="M1282,940 V953 M1275,946.5 H1289" stroke="#cfcfcf" stroke-width="2.6"/>
<path d="M1281,935.5 H1291 M1286,935.5 V943" stroke="#cfcfcf" stroke-width="1.6"/>
</svg>
<div class="a" style="left:1184px;top:983px;width:416px;height:31px;background:#25a8c2"></div>
<div class="a" style="left:1184px;top:1014px;width:416px;height:1px;background:#2a1e1a"></div>
<div class="a" style="left:1184px;top:1015px;width:416px;height:134px;background:#303030"></div>
<div class="a" style="left:1190px;top:988px;width:68px;height:22px;background:#ff0000;border:2px solid #a8a8a8"></div>
<div class="a" style="left:1276px;top:992.5px;width:12px;height:12px;border-radius:50%;background:#0d0d0d;border:2px solid #c8c8c8"></div>
<div class="t" style="left:1300.5px;top:989.9px;font-size:17.3px;color:#0a0a0a;letter-spacing:0.4px;-webkit-text-stroke:0.25px #0a0a0a">NoColor</div>
<!-- yellow box -->
<div class="a" style="left:1172px;top:684px;width:279.5px;height:470.5px;border:7px solid #fdfa72;border-radius:3px"></div>

<!-- ===== arrow overlay ===== -->
<svg style="left:0;top:0" width="1600" height="1156" viewBox="0 0 1600 1156">
<polygon points="824.7,782.8 965,853.3 942.7,874.8 1141.2,1046.5 1129.4,1056.4 930.9,885.5 907.3,905.7" fill="#fffa62"/>
</svg>
</body></html>
